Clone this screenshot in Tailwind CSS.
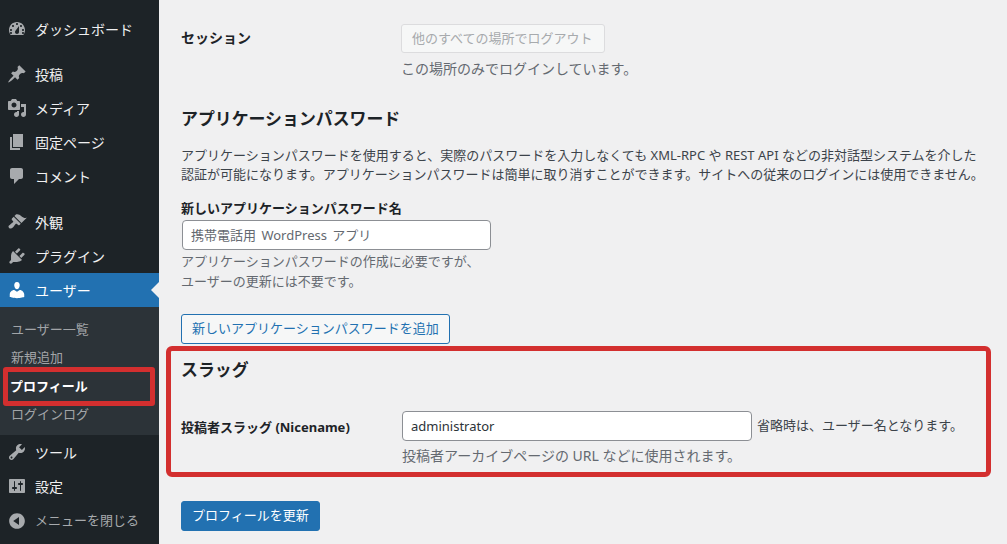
<!DOCTYPE html>
<html lang="ja">
<head>
<meta charset="UTF-8">
<title>プロフィール</title>
<script src="https://cdn.jsdelivr.net/npm/@tailwindcss/browser@4"></script>
</head>
<body class="h-[544px] w-[1007px] overflow-hidden bg-[#f0f0f1] font-['Noto_Sans','Noto_Sans_CJK_JP',sans-serif] text-[14px] text-[#3c434a]">
<div class="flex h-[544px]">
  <!-- sidebar -->
  <nav class="relative w-[159px] shrink-0 bg-[#1d2327] pt-3 text-[14px] text-[#f0f0f1]">
    <a class="flex h-[34px] items-center gap-[8px] pl-[7px]"><svg class="h-5 w-5 fill-[#a7aaad] shrink-0" viewBox="0 0 20 20"><path d="M3.76 16h12.48c1.1-1.37 1.76-3.11 1.76-5 0-4.42-3.58-8-8-8s-8 3.58-8 8c0 1.89.66 3.63 1.76 5zM10 4c.55 0 1 .45 1 1s-.45 1-1 1-1-.45-1-1 .45-1 1-1zM6 6c.55 0 1 .45 1 1s-.45 1-1 1-1-.45-1-1 .45-1 1-1zm8 0c.55 0 1 .45 1 1s-.45 1-1 1-1-.45-1-1 .45-1 1-1zm-5.37 5.55L12 7v6c0 1.1-.9 2-2 2s-2-.9-2-2c0-.57.24-1.08.63-1.45zM4 10c.55 0 1 .45 1 1s-.45 1-1 1-1-.45-1-1 .45-1 1-1zm12 0c.55 0 1 .45 1 1s-.45 1-1 1-1-.45-1-1 .45-1 1-1zm-12 3c.55 0 1 .45 1 1s-.45 1-1 1-1-.45-1-1 .45-1 1-1zm12 0c.55 0 1 .45 1 1s-.45 1-1 1-1-.45-1-1 .45-1 1-1z"/></svg>ダッシュボード</a>
    <a class="mt-[11px] flex h-[34px] items-center gap-[8px] pl-[7px]"><svg class="h-5 w-5 fill-[#a7aaad] shrink-0" viewBox="0 0 20 20"><path d="M10.44 3.02l1.82-1.82 6.36 6.35-1.83 1.82c-1.05-.68-2.48-.57-3.41.36l-.75.75c-.92.93-1.04 2.35-.35 3.41l-1.83 1.82-2.41-2.41-2.8 2.79c-.42.42-3.38 2.71-3.8 2.29s1.86-3.39 2.28-3.81l2.79-2.79L4.1 9.36l1.83-1.82c1.05.69 2.48.57 3.4-.36l.75-.75c.93-.92 1.05-2.35.36-3.41z"/></svg>投稿</a>
    <a class="flex h-[34px] items-center gap-[8px] pl-[7px]"><svg class="h-5 w-5 fill-[#a7aaad] shrink-0" viewBox="0 0 20 20"><path d="M13 11V4c0-.55-.45-1-1-1h-1.67L9 1H5L3.67 3H2c-.55 0-1 .45-1 1v7c0 .55.45 1 1 1h10c.55 0 1-.45 1-1zM7 4.5c1.38 0 2.5 1.12 2.5 2.5S8.38 9.5 7 9.5 4.5 8.38 4.5 7 5.62 4.5 7 4.5zM14 6h5v10.5c0 1.38-1.12 2.5-2.5 2.5S14 17.88 14 16.5s1.12-2.5 2.5-2.5c.17 0 .34.02.5.05V9h-3V6zm-4 8.05V13h2v3.5c0 1.38-1.12 2.5-2.5 2.5S7 17.88 7 16.5 8.12 14 9.5 14c.17 0 .34.02.5.05z"/></svg>メディア</a>
    <a class="flex h-[34px] items-center gap-[8px] pl-[7px]"><svg class="h-5 w-5 fill-[#a7aaad] shrink-0" viewBox="0 0 20 20"><path d="M6 15V2h10v13H6zm-1 1h8v2H3V5h2v11z"/></svg>固定ページ</a>
    <a class="flex h-[34px] items-center gap-[8px] pl-[7px]"><svg class="h-5 w-5 fill-[#a7aaad] shrink-0" viewBox="0 0 20 20"><path d="M5 2h9c1.1 0 2 .9 2 2v7c0 1.1-.9 2-2 2h-2l-5 5v-5H5c-1.1 0-2-.9-2-2V4c0-1.1.9-2 2-2z"/></svg>コメント</a>
    <a class="mt-3 flex h-[34px] items-center gap-[8px] pl-[7px]"><svg class="h-5 w-5 fill-[#a7aaad] shrink-0" viewBox="0 0 20 20"><path d="M14.48 11.06L7.41 3.99l1.5-1.5c.5-.56 2.3-.47 3.51.32 1.21.8 1.43 1.28 2.91 2.1 1.18.64 2.45 1.26 4.45.85zm-.71.71L6.7 4.7 4.93 6.47c-.39.39-.39 1.02 0 1.41l1.06 1.06c.39.39.39 1.03 0 1.42-.6.6-1.43 1.11-2.21 1.69-.35.26-.7.53-1.01.84C1.43 13.23.99 14.8 2.1 15.9c1.1 1.1 2.68.67 3.99-.72.31-.31.58-.66.84-1.01.58-.78 1.09-1.61 1.69-2.21.39-.39 1.03-.39 1.42 0l1.06 1.06c.39.39 1.02.39 1.41 0z"/></svg>外観</a>
    <a class="flex h-[34px] items-center gap-[8px] pl-[7px]"><svg class="h-5 w-5 fill-[#a7aaad] shrink-0" viewBox="0 0 20 20"><path d="M13.11 4.36L9.87 7.6 8 5.73l3.24-3.24c.35-.34 1.05-.2 1.56.32.52.51.66 1.21.31 1.55zm-8 1.77l.91-1.12 9.01 9.01-1.19.84c-.71.71-2.63 1.16-3.82 1.16H6.14L4.9 17.26c-.59.59-1.54.59-2.12 0-.59-.58-.59-1.53 0-2.12l1.24-1.24v-3.88c0-1.13.4-3.19 1.09-3.89zm7.26 3.97l3.24-3.24c.34-.35 1.04-.21 1.55.31.52.51.66 1.21.31 1.55l-3.24 3.25z"/></svg>プラグイン</a>
    <a class="relative flex h-[34px] items-center gap-[8px] bg-[#2271b1] pl-[7px] text-white"><svg class="h-5 w-5 fill-white shrink-0" viewBox="0 0 20 20"><path d="M10 9.25c-2.27 0-2.73-3.44-2.73-3.44C7 4.02 7.82 2 9.97 2c2.16 0 2.98 2.02 2.71 3.81 0 0-.41 3.44-2.68 3.44zm0 2.57L12.72 10c2.39 0 4.52 2.33 4.52 4.53v2.49s-3.65 1.13-7.24 1.13c-3.65 0-7.24-1.13-7.24-1.13v-2.49c0-2.25 1.94-4.48 4.47-4.48z"/></svg>ユーザー<span class="absolute right-0 top-[9px] border-y-8 border-r-8 border-y-transparent border-r-[#f0f0f1]"></span></a>
    <div class="flex h-[128px] flex-col bg-[#2c3338] pt-[9px] pl-[11px] text-[13px] text-[#c3c4c7]/80">
      <a class="flex h-[28px] items-center">ユーザー一覧</a>
      <a class="flex h-[28px] items-center">新規追加</a>
      <a class="-ml-px flex h-[29px] items-center font-bold text-white">プロフィール</a>
      <a class="flex h-[28px] items-center">ログインログ</a>
    </div>
    <a class="flex h-[34px] items-center gap-[8px] pl-[7px]"><svg class="h-5 w-5 fill-[#a7aaad] shrink-0" viewBox="0 0 20 20"><path d="M16.68 9.77c-1.34 1.34-3.3 1.67-4.95.99l-5.41 6.52c-.99.99-2.59.99-3.58 0s-.99-2.59 0-3.57l6.52-5.42c-.68-1.65-.35-3.61.99-4.95 1.28-1.28 3.12-1.62 4.72-1.06l-2.89 2.89 2.82 2.82 2.86-2.87c.53 1.58.18 3.39-1.08 4.65zM3.81 16.21c.4.39 1.04.39 1.43 0 .4-.4.4-1.04 0-1.43-.39-.4-1.03-.4-1.43 0-.39.39-.39 1.03 0 1.43z"/></svg>ツール</a>
    <a class="flex h-[34px] items-center gap-[8px] pl-[7px]"><svg class="h-5 w-5 fill-[#a7aaad] shrink-0" viewBox="0 0 20 20"><path d="M18 16V4c0-.55-.45-1-1-1H3c-.55 0-1 .45-1 1v12c0 .55.45 1 1 1h14c.55 0 1-.45 1-1zM8 11h1c.55 0 1 .45 1 1s-.45 1-1 1H8v1.5c0 .28-.22.5-.5.5s-.5-.22-.5-.5V13H6c-.55 0-1-.45-1-1s.45-1 1-1h1V5.5c0-.28.22-.5.5-.5s.5.22.5.5V11zm5-2h-1c-.55 0-1-.45-1-1s.45-1 1-1h1V5.5c0-.28.22-.5.5-.5s.5.22.5.5V7h1c.55 0 1 .45 1 1s-.45 1-1 1h-1v5.5c0 .28-.22.5-.5.5s-.5-.22-.5-.5V9z"/></svg>設定</a>
    <a class="mt-px flex h-[34px] items-center gap-[8px] pl-[7px] text-[13px] text-[#a7aaad]"><svg class="h-5 w-5 fill-[#a7aaad] shrink-0" viewBox="0 0 20 20"><path d="M10 2.16c4.33 0 7.84 3.51 7.84 7.84s-3.51 7.84-7.84 7.84S2.16 14.33 2.16 10 5.71 2.16 10 2.16zm2 11.72V6.12L6.18 9.97z"/></svg>メニューを閉じる</a>
    <!-- red highlight -->
    <div class="absolute left-[3px] top-[367px] h-[39px] w-[152px] rounded-[3px] border-[5px] border-[#d32f2f]"></div>
  </nav>

  <!-- main -->
  <main class="relative flex-1 pl-[22px]">
    <section class="flex pt-6">
      <div class="w-[220px] pt-[3px] font-bold text-[#1d2327]">セッション</div>
      <div>
        <button class="flex h-[29px] w-[204px] items-center rounded-[3px] border border-[#dcdcde] bg-[#f6f7f7] px-[10px] text-[13px] text-[#a7aaad]">他のすべての場所でログアウト</button>
        <p class="mt-[5px] leading-[21px] text-[#646970]">この場所のみでログインしています。</p>
      </div>
    </section>

    <h2 class="mt-[27px] text-[16.9px] font-bold leading-[26px] text-[#1d2327]">アプリケーションパスワード</h2>
    <p class="mt-[14px] w-[820px] text-[13px] leading-[19px]">アプリケーションパスワードを使用すると、実際のパスワードを入力しなくても XML-RPC や REST API などの非対話型システムを介した<br>認証が可能になります。アプリケーションパスワードは簡単に取り消すことができます。サイトへの従来のログインには使用できません。</p>

    <label class="mt-[15px] block text-[13px] font-bold leading-[19px] text-[#1d2327]">新しいアプリケーションパスワード名</label>
    <input class="mt-[2px] ml-px block h-[30px] w-[309px] rounded-[4px] border border-[#8c8f94] bg-white px-2 text-[13px] [word-spacing:2px] placeholder:text-[#646970]" placeholder="携帯電話用 WordPress アプリ">
    <p class="mt-[1px] text-[13px] leading-[20px] text-[#646970]">アプリケーションパスワードの作成に必要ですが、<br>ユーザーの更新には不要です。</p>
    <button class="mt-[23px] flex h-[30px] items-center rounded-[3px] border border-[#2271b1] bg-[#f6f7f7] px-[10px] text-[13px] text-[#2271b1]">新しいアプリケーションパスワードを追加</button>

    <h2 class="mt-[13px] text-[16.9px] font-bold leading-[26px] text-[#1d2327]">スラッグ</h2>
    <section class="mt-[28px] flex">
      <div class="w-[221px] pt-[7px] text-[13px] font-bold text-[#1d2327]">投稿者スラッグ (Nicename)</div>
      <div>
        <div class="flex items-center">
          <input class="block h-[30px] w-[350px] rounded-[4px] border border-[#8c8f94] bg-white px-2 text-[13px] text-[#2c3338]" value="administrator">
          <span class="ml-[5px] text-[13px]">省略時は、ユーザー名となります。</span>
        </div>
        <p class="mt-[5px] text-[14px] leading-[20px] text-[#646970]">投稿者アーカイブページの URL などに使用されます。</p>
      </div>
    </section>
    <button class="mt-[35px] flex h-[30px] items-center rounded-[3px] border border-[#2271b1] bg-[#2271b1] px-[10px] text-[13px] text-white">プロフィールを更新</button>

    <!-- red highlight -->
    <div class="absolute left-[7px] top-[346px] h-[131px] w-[825px] rounded-[6px] border-[5px] border-[#d32f2f]"></div>
  </main>
</div>
</body>
</html>
